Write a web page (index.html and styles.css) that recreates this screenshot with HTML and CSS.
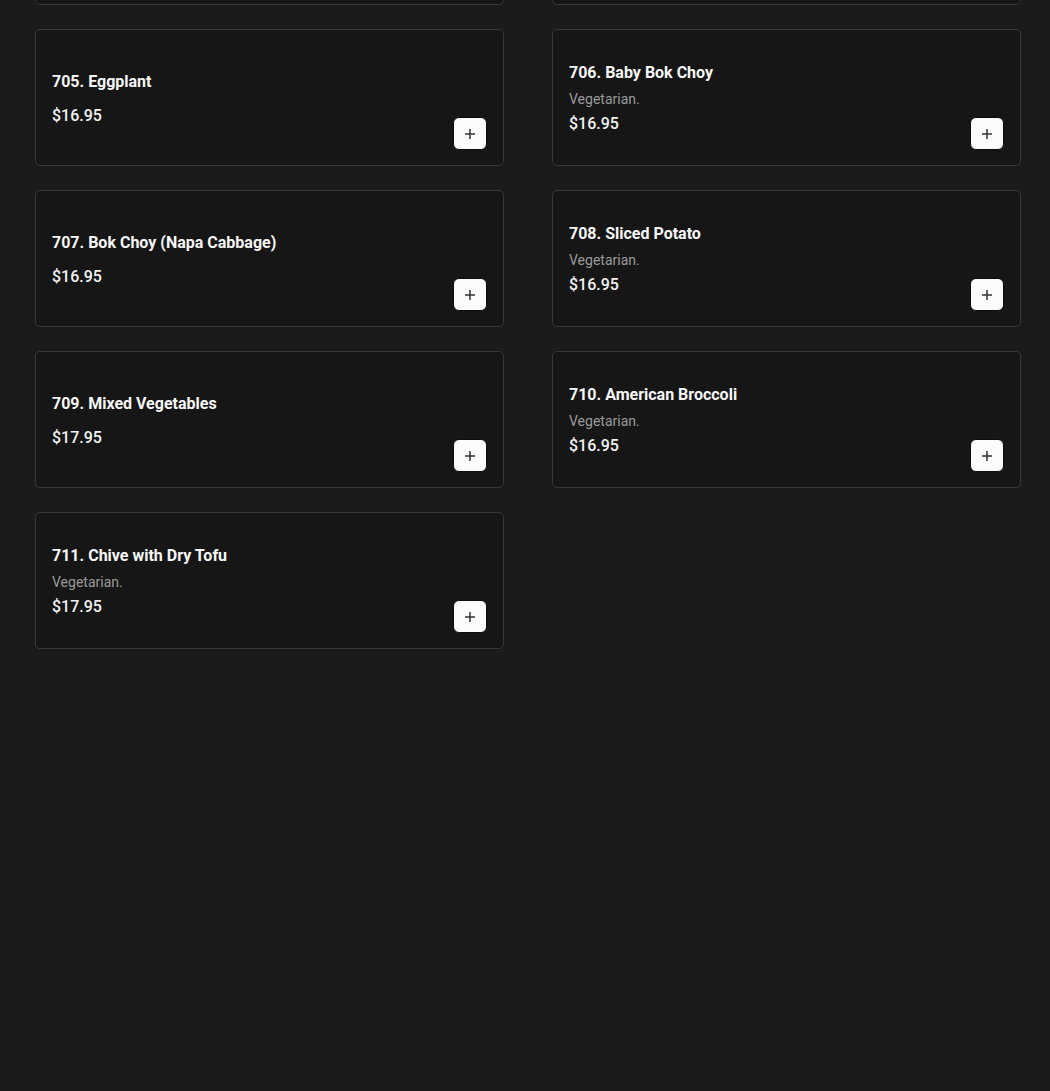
FILE: index.html
```html
<!DOCTYPE html>
<html lang="en">
<head>
<meta charset="utf-8">
<title>Menu</title>
<link rel="stylesheet" href="styles.css">
</head>
<body>
<main class="viewport">
  <div class="menu-grid">
    <div class="card card-offscreen" aria-hidden="true"></div>
    <div class="card card-offscreen" aria-hidden="true"></div>

    <div class="card">
      <div class="info">
        <div class="title">705. Eggplant</div>
        <div class="price">$16.95</div>
      </div>
      <button class="add" aria-label="Add"><svg viewBox="0 0 12 12" width="12" height="12"><path d="M6 1v10M1 6h10" stroke="#333" stroke-width="1.5" fill="none"/></svg></button>
    </div>
    <div class="card">
      <div class="info with-desc">
        <div class="title">706. Baby Bok Choy</div>
        <div class="desc">Vegetarian.</div>
        <div class="price">$16.95</div>
      </div>
      <button class="add" aria-label="Add"><svg viewBox="0 0 12 12" width="12" height="12"><path d="M6 1v10M1 6h10" stroke="#333" stroke-width="1.5" fill="none"/></svg></button>
    </div>

    <div class="card">
      <div class="info">
        <div class="title">707. Bok Choy (Napa Cabbage)</div>
        <div class="price">$16.95</div>
      </div>
      <button class="add" aria-label="Add"><svg viewBox="0 0 12 12" width="12" height="12"><path d="M6 1v10M1 6h10" stroke="#333" stroke-width="1.5" fill="none"/></svg></button>
    </div>
    <div class="card">
      <div class="info with-desc">
        <div class="title">708. Sliced Potato</div>
        <div class="desc">Vegetarian.</div>
        <div class="price">$16.95</div>
      </div>
      <button class="add" aria-label="Add"><svg viewBox="0 0 12 12" width="12" height="12"><path d="M6 1v10M1 6h10" stroke="#333" stroke-width="1.5" fill="none"/></svg></button>
    </div>

    <div class="card">
      <div class="info">
        <div class="title">709. Mixed Vegetables</div>
        <div class="price">$17.95</div>
      </div>
      <button class="add" aria-label="Add"><svg viewBox="0 0 12 12" width="12" height="12"><path d="M6 1v10M1 6h10" stroke="#333" stroke-width="1.5" fill="none"/></svg></button>
    </div>
    <div class="card">
      <div class="info with-desc">
        <div class="title">710. American Broccoli</div>
        <div class="desc">Vegetarian.</div>
        <div class="price">$16.95</div>
      </div>
      <button class="add" aria-label="Add"><svg viewBox="0 0 12 12" width="12" height="12"><path d="M6 1v10M1 6h10" stroke="#333" stroke-width="1.5" fill="none"/></svg></button>
    </div>

    <div class="card">
      <div class="info with-desc">
        <div class="title">711. Chive with Dry Tofu</div>
        <div class="desc">Vegetarian.</div>
        <div class="price">$17.95</div>
      </div>
      <button class="add" aria-label="Add"><svg viewBox="0 0 12 12" width="12" height="12"><path d="M6 1v10M1 6h10" stroke="#333" stroke-width="1.5" fill="none"/></svg></button>
    </div>
  </div>
</main>
</body>
</html>
```
FILE: styles.css
```css
html, body {
  margin: 0;
  padding: 0;
  background: #1b1b1b;
  height: 100%;
}

body {
  font-family: Roboto, "Liberation Sans", Arial, sans-serif;
  color: #f5f5f5;
  overflow: hidden;
}

.viewport {
  height: 1091px;
  overflow: hidden;
}

.menu-grid {
  /* page is scrolled: first row is mostly above the fold */
  margin-top: -132px;
  padding-left: 35px;
  display: grid;
  grid-template-columns: 469px 469px;
  column-gap: 48px;
  row-gap: 24px;
}

.card {
  box-sizing: border-box;
  height: 137px;
  background: #161616;
  border: 1px solid #383838;
  border-radius: 5px;
  padding: 0 16px 15px 16px;
  display: flex;
  align-items: center;
}

.info {
  flex: 1;
  display: flex;
  flex-direction: column;
  padding-top: 18px;
}

.info.with-desc {
  padding-top: 16px;
}

.title {
  font-size: 16px;
  font-weight: 700;
  line-height: 22px;
  color: #f7f7f7;
  margin-bottom: 6px;
}

.desc {
  font-size: 14px;
  line-height: 18px;
  color: #9a9a9a;
  margin-bottom: 5px;
}

.price {
  font-size: 16px;
  font-weight: 500;
  line-height: 22px;
  color: #f2f2f2;
}

.title + .price {
  margin-top: 6px;
}

.add {
  align-self: flex-end;
  box-sizing: border-box;
  width: 34px;
  height: 33px;
  padding: 0;
  border: 1px solid #0c0c0c;
  border-radius: 6px;
  background: #fbfbfb;
  display: flex;
  align-items: center;
  justify-content: center;
  cursor: pointer;
}

.add svg {
  display: block;
}
```
